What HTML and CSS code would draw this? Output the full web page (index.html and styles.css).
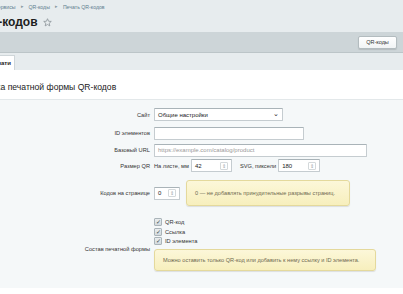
FILE: index.html
```html
<!DOCTYPE html>
<html lang="ru">
<head>
  <meta charset="UTF-8">
  <meta name="viewport" content="width=device-width, initial-scale=1.0">
  <title>Печать QR-кодов</title>
  <link rel="stylesheet" href="styles.css">
</head>
<body>
  <div class="page">
    <div class="breadcrumbs">
      <span class="crumb first">Сервисы</span>
      <span class="sep">▸</span>
      <span class="crumb">QR-коды</span>
      <span class="sep">▸</span>
      <span class="crumb">Печать QR-кодов</span>
    </div>

    <div class="title-row">
      <h1 class="title">Печать QR-кодов</h1>
      <svg class="star" width="9" height="9" viewBox="0 0 10 10">
        <path d="M5 0.8 L6.2 3.6 L9.2 3.8 L6.9 5.8 L7.6 8.8 L5 7.2 L2.4 8.8 L3.1 5.8 L0.8 3.8 L3.8 3.6 Z" fill="none" stroke="#8c9599" stroke-width="0.9" stroke-linejoin="round"/>
      </svg>
    </div>

    <div class="toolbar">
      <div class="btn">QR-коды</div>
    </div>

    <div class="tabs">
      <div class="tab">Параметры печати</div>
    </div>

    <div class="panel">
      <div class="heading">Настройка печатной формы QR-кодов</div>

      <div class="form">
        <div class="row r-site">
          <div class="label">Сайт</div>
          <div class="field">
            <div class="control select">Общие настройки<span class="caret">⌄</span></div>
          </div>
        </div>

        <div class="row r-ids">
          <div class="label">ID элементов</div>
          <div class="field">
            <div class="control ids"></div>
          </div>
        </div>

        <div class="row r-url">
          <div class="label">Базовый URL</div>
          <div class="field">
            <div class="control url placeholder">https://example.com/catalog/product</div>
          </div>
        </div>

        <div class="row r-size">
          <div class="label">Размер QR</div>
          <div class="field">
            <span class="inline-label">На листе, мм</span>
            <div class="control num mm">42<span class="spin">⇕</span></div>
            <span class="inline-label svg-label">SVG, пиксели</span>
            <div class="control num px">180<span class="spin">⇕</span></div>
          </div>
        </div>

        <div class="row per-page">
          <div class="label">Кодов на странице</div>
          <div class="field">
            <div class="control num count">0<span class="spin">⇕</span></div>
            <div class="note note-breaks">0 — не добавлять принудительные разрывы страниц.</div>
          </div>
        </div>

        <div class="row compose">
          <div class="label">Состав печатной формы</div>
          <div class="field column">
            <label class="check"><span class="box">✓</span>QR-код</label>
            <label class="check"><span class="box">✓</span>Ссылка</label>
            <label class="check"><span class="box">✓</span>ID элемента</label>
            <div class="note note-compose">Можно оставить только QR-код или добавить к нему ссылку и ID элемента.</div>
          </div>
        </div>
      </div>
    </div>
  </div>
</body>
</html>
```

FILE: styles.css
```css
* {
  margin: 0;
  padding: 0;
  box-sizing: border-box;
}

body {
  background: #e7ecee;
  font-family: "Liberation Sans", Arial, sans-serif;
  color: #333;
  overflow: hidden;
  height: 294px;
}

.page {
  width: 403px;
  overflow: hidden;
}

/* breadcrumbs */
.breadcrumbs {
  height: 12px;
  padding-top: 1px;
  display: flex;
  align-items: center;
  gap: 5px;
  font-size: 5.2px;
  color: #5f7e8e;
  white-space: nowrap;
}

.crumb.first {
  margin-left: -6px;
}

.sep {
  font-size: 4.5px;
  color: #8a9aa2;
}

/* title */
.title-row {
  height: 20px;
  display: flex;
  align-items: center;
  gap: 5px;
  white-space: nowrap;
}

.title {
  font-size: 12px;
  font-weight: bold;
  color: #1e1e1e;
  margin-left: -65px;
}

.star {
  margin-top: 1px;
}

/* toolbar */
.toolbar {
  height: 21px;
  background: #cdd5d8;
  border-bottom: 1px solid #bcc5c8;
  display: flex;
  align-items: center;
  justify-content: flex-end;
  padding-right: 6px;
}

.btn {
  width: 39px;
  height: 13px;
  display: flex;
  align-items: center;
  justify-content: center;
  background: linear-gradient(#ffffff, #f1f4f5);
  border: 1px solid #b3bcbf;
  border-radius: 2px;
  box-shadow: 0 1px 1px rgba(0, 0, 0, 0.12);
  font-size: 5.5px;
  color: #333;
}

/* tabs */
.tabs {
  height: 17px;
  display: flex;
  align-items: flex-end;
}

.tab {
  height: 15px;
  margin-left: -52px;
  padding: 0 3px 0 6px;
  display: flex;
  align-items: center;
  background: #fff;
  border: 1px solid #cfd6d9;
  border-bottom: none;
  font-size: 6px;
  font-weight: bold;
  color: #222;
  white-space: nowrap;
}

/* panel */
.panel {
  background: #fff;
  padding-bottom: 6px;
}

.heading {
  height: 30px;
  padding-top: 12px;
  margin-left: -37px;
  font-size: 8.6px;
  color: #222;
  white-space: nowrap;
  border-bottom: 1px solid #e3e8ea;
}

.form {
  background: #f5f8f9;
  padding: 5px 0 12px;
  height: 188px;
}

.row {
  display: flex;
  align-items: center;
  font-size: 5.7px;
}

.r-site {
  height: 19px;
}

.r-ids {
  height: 18px;
}

.r-url {
  height: 16px;
}

.r-size {
  height: 15px;
}

.label {
  width: 154px;
  flex-shrink: 0;
  padding-right: 4px;
  text-align: right;
  color: #333;
}

.field {
  display: flex;
  align-items: center;
  gap: 2px;
}

.field.column {
  flex-direction: column;
  align-items: flex-start;
  gap: 1.5px;
}

/* inputs */
.control {
  height: 13px;
  padding: 0 3px;
  display: flex;
  align-items: center;
  justify-content: space-between;
  background: #fff;
  border: 1px solid #c5ccd0;
  border-top-color: #a9b3b8;
  border-radius: 1px;
  font-size: 6px;
  color: #222;
  white-space: nowrap;
}

.select {
  width: 129px;
}

.caret {
  font-size: 7px;
  line-height: 7px;
  margin-top: -3px;
}

.ids {
  width: 150px;
}

.url {
  width: 213px;
}

.placeholder {
  color: #9a9a9a;
}

.inline-label {
  color: #333;
}

.svg-label {
  margin-left: 6px;
}

.mm {
  width: 41px;
}

.px {
  width: 42px;
}

.count {
  width: 26px;
}

.spin {
  font-size: 5px;
  color: #9aa3a7;
  border: 1px solid #d4d9db;
  border-radius: 1px;
  padding: 0 1px;
  line-height: 6px;
}

/* notes */
.note {
  background: linear-gradient(#fcf7d9, #f7efbd);
  border: 1px solid #e4d99c;
  border-radius: 3px;
  box-shadow: 0 1px 1px rgba(0, 0, 0, 0.1);
  color: #6f6a50;
  font-size: 5.6px;
  display: flex;
  align-items: center;
  padding: 0 8px;
  white-space: nowrap;
}

.per-page {
  margin-top: 7px;
}

.note-breaks {
  width: 164px;
  height: 26px;
  margin-left: 4px;
}

.compose {
  margin-top: 12px;
  align-items: flex-start;
}

.compose .label {
  padding-top: 28px;
}

.note-compose {
  width: 222px;
  height: 22px;
  margin-top: 2.5px;
}

/* checkboxes */
.check {
  display: flex;
  align-items: center;
  gap: 3px;
  height: 8px;
  color: #333;
}

.box {
  width: 8px;
  height: 8px;
  display: flex;
  align-items: center;
  justify-content: center;
  background: linear-gradient(#e9edef, #d3dadd);
  border: 1px solid #aab4b9;
  border-radius: 1px;
  font-size: 6px;
  color: #3b4a52;
  line-height: 1;
}
```
